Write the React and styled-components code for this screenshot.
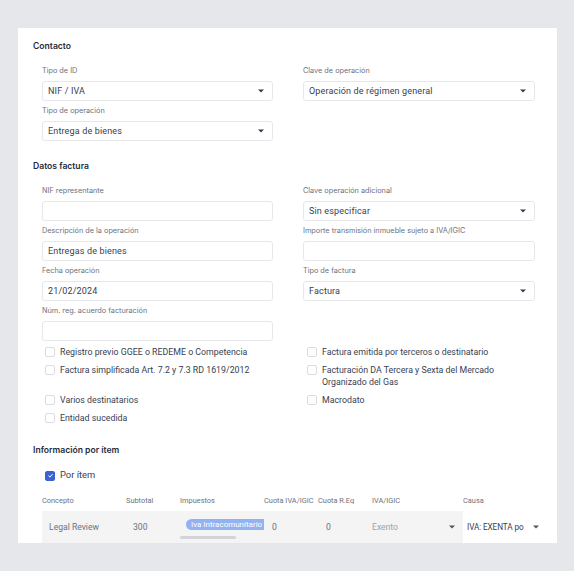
import styled, { createGlobalStyle } from "styled-components";

const GlobalStyle = createGlobalStyle`
  html, body {
    margin: 0;
    padding: 0;
    background: #e5e7eb;
  }
  body {
    font-family: "Inter", "Roboto", sans-serif;
    color: #1f2937;
  }
  #root {
    min-height: 571px;
  }
`;

const Page = styled.div`
  padding: 28px 17px 0 18px;
`;

const Card = styled.div`
  background: #ffffff;
  height: 515px;
  overflow: hidden;
  padding: 10px 22px 0 15px;
  box-sizing: border-box;
`;

const SectionTitle = styled.h3`
  margin: ${(p) => p.$top || 0}px 0 10px;
  font-size: 8.6px;
  line-height: 16px;
  font-weight: 600;
  color: #1f2937;
`;

const Grid = styled.div`
  display: grid;
  grid-template-columns: 231px 232px;
  column-gap: 30px;
  row-gap: 3px;
  padding-left: 9px;
  align-items: start;
`;

const Field = styled.div`
  display: flex;
  flex-direction: column;
  grid-column: ${(p) => p.$col || "auto"};
  grid-row: ${(p) => p.$row || "auto"};
`;

const Label = styled.label`
  font-size: 7.3px;
  line-height: 14px;
  color: #6b7280;
  margin-bottom: 3px;
`;

const Input = styled.input`
  box-sizing: border-box;
  height: 20px;
  width: 100%;
  border: 1px solid #e5e7eb;
  border-radius: 3px;
  padding: 0 5px;
  font-family: "Roboto", sans-serif;
  font-size: 9px;
  letter-spacing: 0.15px;
  color: #374151;
  background: #fff;
  outline: none;
`;

const Select = styled.div`
  box-sizing: border-box;
  height: 20px;
  border: 1px solid #e5e7eb;
  border-radius: 3px;
  padding: 0 8px 0 5px;
  display: flex;
  align-items: center;
  justify-content: space-between;
  font-family: "Roboto", sans-serif;
  font-size: 9px;
  letter-spacing: 0.15px;
  color: #374151;
`;

const Caret = ({ color = "#374151" }) => (
  <svg width="6" height="4" viewBox="0 0 6 4">
    <polygon points="0,0.5 6,0.5 3,3.5" fill={color} />
  </svg>
);

const Checks = styled.div`
  display: grid;
  grid-template-columns: 231px 232px;
  column-gap: 30px;
  row-gap: 6px;
  padding-left: 12px;
  margin-top: 5px;
  font-family: "Roboto", sans-serif;
`;

const CheckRow = styled.div`
  display: flex;
  align-items: flex-start;
  gap: 5px;
  font-size: 8.8px;
  line-height: 12px;
  color: #374151;
  grid-column: ${(p) => p.$col || "auto"};
  grid-row: ${(p) => p.$row || "auto"};
  margin-left: ${(p) => p.$shift || 0}px;
`;

const Box = styled.span`
  flex: none;
  box-sizing: border-box;
  width: 10px;
  height: 10px;
  margin-top: 1px;
  border-radius: 2px;
  border: 1px solid ${(p) => (p.$checked ? "#3b63d8" : "#d9dce1")};
  background: ${(p) => (p.$checked ? "#3b63d8" : "#fff")};
  display: flex;
  align-items: center;
  justify-content: center;
`;

const Tick = () => (
  <svg width="7" height="7" viewBox="0 0 10 10">
    <path d="M2 5.2 L4.2 7.3 L8 3" stroke="#fff" strokeWidth="1.4" fill="none" />
  </svg>
);

const Check = ({ label, checked, col, row, shift }) => (
  <CheckRow $col={col} $row={row} $shift={shift}>
    <Box $checked={checked}>{checked && <Tick />}</Box>
    <span>{label}</span>
  </CheckRow>
);

const ItemCheck = styled.div`
  padding-left: 12px;
  margin-top: 11px;
  display: flex;
  align-items: center;
  gap: 5px;
  font-family: "Roboto", sans-serif;
  font-size: 9.4px;
  line-height: 12px;
  color: #374151;
`;

const Table = styled.div`
  margin-top: 10px;
  margin-left: 9px;
  display: grid;
  grid-template-columns: 84px 54px 84px 54px 54px 91px 86px;
  font-family: "Roboto", sans-serif;
`;

const Th = styled.div`
  font-size: 7.4px;
  line-height: 20px;
  color: #71717a;
  white-space: nowrap;
`;

const Td = styled.div`
  height: 32px;
  box-sizing: border-box;
  background: ${(p) => (p.$white ? "#ffffff" : "#f4f4f5")};
  padding-left: ${(p) => (p.$pad === undefined ? 7 : p.$pad)}px;
  padding-right: ${(p) => p.$right || 0}px;
  display: flex;
  align-items: center;
  justify-content: ${(p) => (p.$between ? "space-between" : "flex-start")};
  font-size: 8.6px;
  color: ${(p) => p.$color || "#6b7280"};
  white-space: nowrap;
  overflow: hidden;
`;

const CellText = styled.span`
  font-size: 8.2px;
  letter-spacing: -0.1px;
`;

const TaxCell = styled.div`
  height: 32px;
  background: #f4f4f5;
  padding-left: 6px;
  display: flex;
  flex-direction: column;
  justify-content: flex-end;
  overflow: hidden;
`;

const Tag = styled.span`
  align-self: flex-start;
  background: #93b2f2;
  color: #ffffff;
  font-size: 8px;
  line-height: 11px;
  padding: 0 5px;
  border-radius: 6px 0 0 6px;
  white-space: nowrap;
`;

const ScrollBar = styled.span`
  display: block;
  width: 56px;
  height: 3px;
  border-radius: 2px;
  background: #d4d4d8;
  margin: 6px 0 4px -6px;
`;

export default function App() {
  return (
    <>
      <GlobalStyle />
      <Page>
        <Card>
          <SectionTitle>Contacto</SectionTitle>
          <Grid>
            <Field $col="1" $row="1">
              <Label>Tipo de ID</Label>
              <Select>
                NIF / IVA <Caret />
              </Select>
            </Field>
            <Field $col="1" $row="2">
              <Label>Tipo de operación</Label>
              <Select>
                Entrega de bienes <Caret />
              </Select>
            </Field>
            <Field $col="2" $row="1">
              <Label>Clave de operación</Label>
              <Select>
                Operación de régimen general <Caret />
              </Select>
            </Field>
          </Grid>

          <SectionTitle $top={17}>Datos factura</SectionTitle>
          <Grid>
            <Field $col="1" $row="1">
              <Label>NIF representante</Label>
              <Input defaultValue="" />
            </Field>
            <Field $col="1" $row="2">
              <Label>Descripción de la operación</Label>
              <Input defaultValue="Entregas de bienes" />
            </Field>
            <Field $col="1" $row="3">
              <Label>Fecha operación</Label>
              <Input defaultValue="21/02/2024" />
            </Field>
            <Field $col="1" $row="4">
              <Label>Núm. reg. acuerdo facturación</Label>
              <Input defaultValue="" />
            </Field>
            <Field $col="2" $row="1">
              <Label>Clave operación adicional</Label>
              <Select>
                Sin especificar <Caret />
              </Select>
            </Field>
            <Field $col="2" $row="2">
              <Label>Importe transmisión inmueble sujeto a IVA/IGIC</Label>
              <Input defaultValue="" />
            </Field>
            <Field $col="2" $row="3">
              <Label>Tipo de factura</Label>
              <Select>
                Factura <Caret />
              </Select>
            </Field>
          </Grid>

          <Checks>
            <Check col="1" row="1" label="Registro previo GGEE o REDEME o Competencia" />
            <Check col="1" row="2" label="Factura simplificada Art. 7.2 y 7.3 RD 1619/2012" />
            <Check col="1" row="3" label="Varios destinatarios" />
            <Check col="1" row="4" label="Entidad sucedida" />
            <Check col="2" row="1" shift={1} label="Factura emitida por terceros o destinatario" />
            <Check
              col="2"
              row="2"
              shift={1}
              label="Facturación DA Tercera y Sexta del Mercado Organizado del Gas"
            />
            <Check col="2" row="3" shift={1} label="Macrodato" />
          </Checks>

          <SectionTitle $top={18}>Información por ítem</SectionTitle>
          <ItemCheck>
            <Box $checked>
              <Tick />
            </Box>
            Por ítem
          </ItemCheck>

          <Table>
            <Th>Concepto</Th>
            <Th>Subtotal</Th>
            <Th>Impuestos</Th>
            <Th>Cuota IVA/IGIC</Th>
            <Th>Cuota R.Eq</Th>
            <Th>IVA/IGIC</Th>
            <Th>Causa</Th>

            <Td>Legal Review</Td>
            <Td>300</Td>
            <TaxCell>
              <Tag>Iva Intracomunitario Exento</Tag>
              <ScrollBar />
            </TaxCell>
            <Td $pad={8}>0</Td>
            <Td $pad={8}>0</Td>
            <Td $pad={0} $right={8} $between $color="#9ca3af">
              Exento <Caret color="#4b5563" />
            </Td>
            <Td $white $pad={4} $right={10} $between $color="#374151">
              <CellText>IVA: EXENTA po</CellText>
              <Caret color="#4b5563" />
            </Td>
          </Table>
        </Card>
      </Page>
    </>
  );
}
